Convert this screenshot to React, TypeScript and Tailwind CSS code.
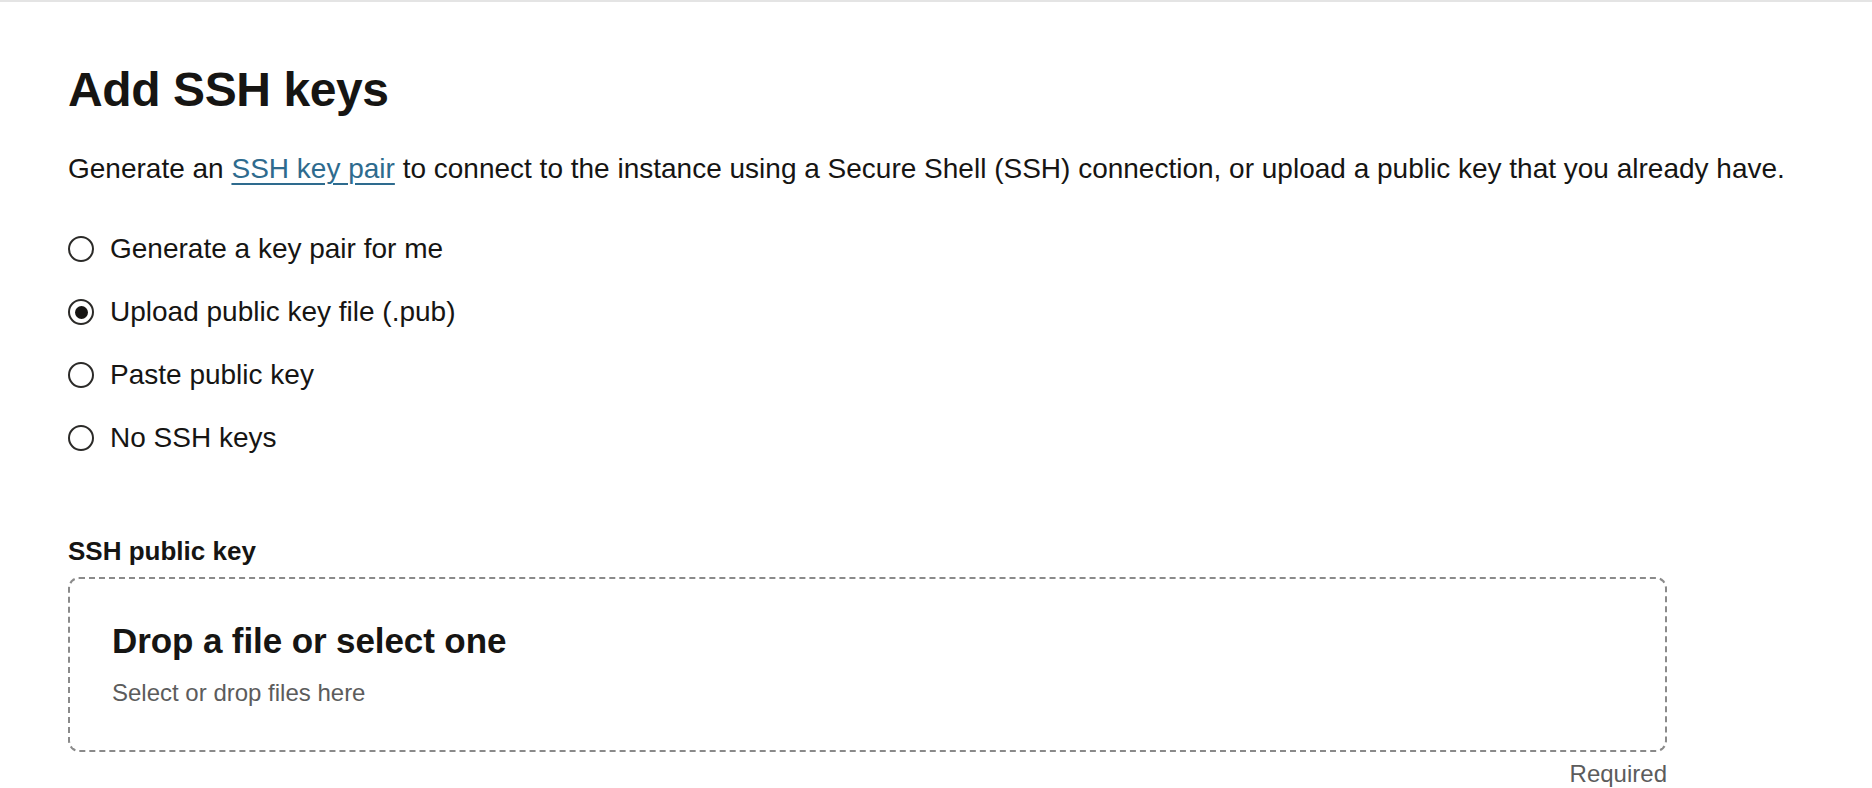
import React, { useState } from 'react';

const OPTIONS = [
  { id: 'generate', label: 'Generate a key pair for me' },
  { id: 'upload', label: 'Upload public key file (.pub)' },
  { id: 'paste', label: 'Paste public key' },
  { id: 'none', label: 'No SSH keys' },
];

const Radio = ({ checked }: { checked: boolean }) => (
  <span className="flex h-[26px] w-[26px] shrink-0 items-center justify-center rounded-full border-2 border-[#2b2a28] bg-white">
    {checked && <span className="h-[13px] w-[13px] rounded-full bg-[#161513]" />}
  </span>
);

export default function App() {
  const [selected, setSelected] = useState('upload');

  return (
    <div
      className="min-h-screen border-t-2 border-[#e4e4e4] bg-white text-[#161513]"
      style={{ fontFamily: '"Liberation Sans", Arial, sans-serif' }}
    >
      <div className="pl-[68px] pr-10 pt-[64px]">
        <h1 className="text-[48px] font-bold leading-[48px] tracking-[-0.4px]">Add SSH keys</h1>

        <p className="mt-[41px] text-[28px] leading-[28px]">
          Generate an{' '}
          <a
            href="#"
            className="text-[#2e6b8e] underline decoration-2 underline-offset-[5px]"
          >
            SSH key pair
          </a>{' '}
          to connect to the instance using a Secure Shell (SSH) connection, or upload a public key that you already
          have.
        </p>

        {/* Key source */}
        <div className="mt-[46px] flex flex-col gap-[23px]">
          {OPTIONS.map((opt) => (
            <label
              key={opt.id}
              onClick={() => setSelected(opt.id)}
              className="flex h-[40px] cursor-pointer items-center gap-[16px]"
            >
              <Radio checked={selected === opt.id} />
              <span className="text-[28px] leading-[28px]">{opt.label}</span>
            </label>
          ))}
        </div>

        <div className="mt-[80px] w-[1599px]">
          <div className="text-[26px] font-bold leading-[26px]">SSH public key</div>

          <div className="mt-[13px] rounded-[11px] border-2 border-dashed border-[#8a8a8a] px-[42px] pt-[44px] pb-[45px]">
            <div className="text-[35px] font-bold leading-[35px] tracking-[-0.1px]">Drop a file or select one</div>
            <div className="mt-[23px] text-[24px] leading-[24px] text-[#5c5c5c]">Select or drop files here</div>
          </div>

          <div className="mt-[10px] text-right text-[24px] leading-[24px] text-[#5c5c5c]">Required</div>
        </div>
      </div>
    </div>
  );
}
